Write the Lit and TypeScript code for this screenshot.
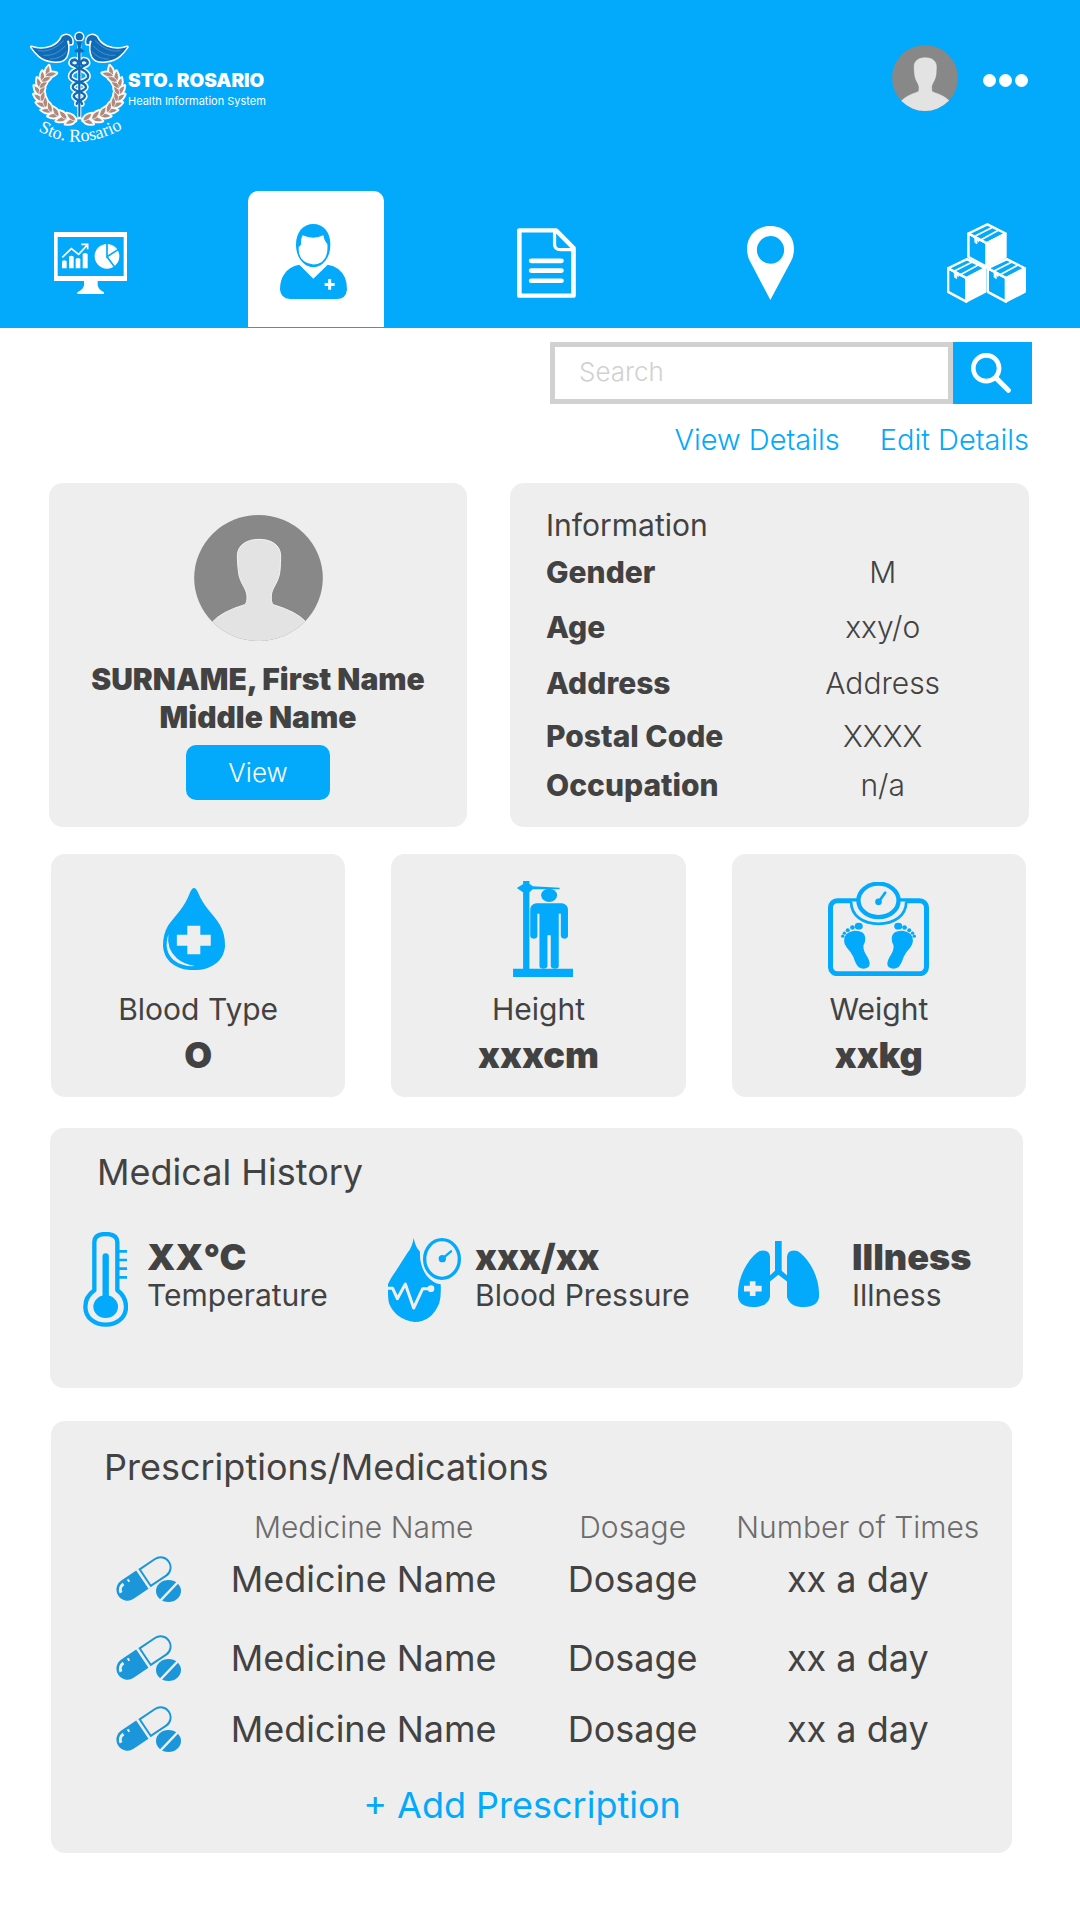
import { LitElement, html, css, svg } from "lit";
import { customElement, state } from "lit/decorators.js";

const BLUE = "#03a9fa";
const PANEL = "#eeeeee";

const rad = (deg: number) => (deg * Math.PI) / 180;

/* Laurel leaves: pairs along an ellipse, pointing up and outward. */
const laurel = () => {
  const out = [];
  for (let a = 97; a <= 214; a += 13) {
    const x = 180 + 118 * Math.cos(rad(a));
    const y = 214 + 86 * Math.sin(rad(a));
    const dir = (Math.atan2(86 * Math.cos(rad(a)), -118 * Math.sin(rad(a))) * 180) / Math.PI;
    for (const turn of [-30, 34]) {
      out.push(svg`<path d="M-5 0Q10 -14 31 0Q10 14 -5 0Z" transform="translate(${x} ${y}) rotate(${dir + turn})"/>`);
    }
  }
  return out;
};

const wing = svg`<path d="M36 81Q66 92 97 80Q120 70 128 50Q140 41 152 49Q162 58 158 72L150 73Q151 57 143 63Q151 88 141 110Q130 128 101 124Q75 121 60 108Q48 98 36 81Z"/>`;
const feathers = svg`<path d="M56 92Q95 100 133 62M72 106Q108 110 138 78M92 117Q122 118 142 95" fill="none" stroke="#5aa5dd" stroke-width="2"/>`;
const snake = svg`<path d="M158 124Q164 116 174 123Q180 136 165 137C148 132 154 118 168 118M165 137C190 150 210 156 206 172C200 188 160 184 160 202C162 216 197 214 197 229C194 242 172 240 172 252" fill="none" stroke-linecap="round"/>`;
const mirror = "translate(360 0) scale(-1 1)";

const logoArt = html`
  <svg class="crest" viewBox="32 30 294 339" role="img" aria-label="Sto. Rosario crest">
    <g fill="#fff" stroke="#fff" stroke-width="9" stroke-linejoin="round">
      ${laurel()}
      <g transform=${mirror}>${laurel()}</g>
      ${wing}
      <g transform=${mirror}>${wing}</g>
      <circle cx="180" cy="50" r="11" />
      <path d="M180 60V298" stroke-width="12" />
      <g stroke-width="16">${snake}<g transform=${mirror}>${snake}</g></g>
    </g>
    <g fill="#ad8a7c" stroke="#fff" stroke-width="2">
      ${laurel()}
      <g transform=${mirror}>${laurel()}</g>
    </g>
    <g fill="#0f6bb6">
      ${wing}${feathers}
      <g transform=${mirror}>${wing}${feathers}</g>
      <circle cx="180" cy="50" r="11" />
      <path d="M172 64H188L184 84L196 94L184 98L183 290H177L176 98L164 94L176 84Z" />
    </g>
    <g stroke="#0f6bb6" stroke-width="7">${snake}<g transform=${mirror}>${snake}</g></g>
    <path id="ribbon" d="M56 332Q180 404 324 318" fill="none" />
    <text class="crest-text"><textPath href="#ribbon">Sto. Rosario</textPath></text>
  </svg>
`;

const avatar = (cls: string) => html`
  <svg class=${cls} viewBox="462 135 387 378" preserveAspectRatio="none" role="img" aria-label="Profile picture">
    <defs><clipPath id="disc"><ellipse cx="655.5" cy="324" rx="193" ry="189" /></clipPath></defs>
    <g clip-path="url(#disc)">
      <rect x="462" y="135" width="387" height="378" fill="#888" />
      <path
        d="M592 258C592 225 620 208 657 208C694 208 722 225 722 258Q722 280 720 302C716 340 695 352 694 378Q693 398 700 404Q770 425 797 455V520H518V455Q545 425 614 404Q622 398 621 378C619 352 598 340 595 302Q592 280 592 258Z"
        fill="#e3e3e3" stroke="#f2f2f2" stroke-width="3" />
    </g>
  </svg>
`;

const crate = svg`
  <path d="M-51 -29L2 -56L53 -29L0 0Z" fill="none" stroke-width="7"/>
  <path d="M-51 -29V41L0 70V0Z" fill="none" stroke-width="7"/>
  <path d="M0 0L53 -29V41L0 70Z" stroke-width="6"/>
  <path d="M18 -48L-36 -19M34 -39L-18 -9" stroke-width="5"/>
  <path d="M-34 -19L-22 -12V-4L-27 -8V2L-33 -2Z" stroke-width="2"/>
`;

const icons = {
  dashboard: html`<svg class="i-dash" viewBox="72 162 219 186" preserveAspectRatio="none" aria-hidden="true">
    <path fill-rule="evenodd" fill="#fff" d="M72 162H291V309H72ZM83 177V294H281V177Z" />
    <path fill="#fff" d="M162 307H203V322Q205 335 222 343V348H142V343Q160 335 162 322Z" />
    <path fill="#fff" d="M96 250Q103 244 110 250V271H96ZM117 236Q124 230 131 236V271H117ZM137 243Q144 237 151 243V271H137ZM158 228Q165 222 173 228V271H158Z" />
    <path fill="none" stroke="#fff" stroke-width="5" d="M97 238L124 212L146 229L170 203M154 199H173V214" />
    <ellipse cx="231" cy="235" rx="37" ry="37" fill="#fff" />
    <path d="M231 196V236L270 211M231 236L256 270" fill="none" stroke=${BLUE} stroke-width="5" />
  </svg>`,
  patient: html`<svg class="i-patient" viewBox="750 128 216 226" preserveAspectRatio="none" aria-hidden="true">
    <g fill=${BLUE}>
      <path d="M850 128C880 128 901 152 901 190C901 232 876 258 850 258C824 258 798 232 798 190C798 152 820 128 850 128Z" />
      <path d="M808 251L850 293L893 251Q930 257 945 290Q951 305 951 325Q948 354 920 354H780Q752 352 750 325Q750 298 762 280Q778 256 808 251Z" />
    </g>
    <path fill="#fff" d="M818 162Q850 177 880 162Q883 180 892 188Q897 248 850 250Q804 246 806 198L813 190Q812 172 818 162Z" />
    <path stroke="#fff" stroke-width="9" d="M884 310H914M899 294V326" />
  </svg>`,
  records: html`<svg class="i-doc" viewBox="48 54 165 207" preserveAspectRatio="none" aria-hidden="true">
    <g fill="none" stroke="#fff" stroke-linejoin="round">
      <path stroke-width="13" d="M54.500 61H157L206 113V254H54.500Z" />
      <path stroke-width="9" d="M153 64V102Q153 118 170 118H206" />
      <path stroke-width="14" stroke-linecap="round" d="M88 151H172M88 180H172M88 210H172" />
    </g>
  </svg>`,
  location: html`<svg class="i-pin" viewBox="692 44 131 220" preserveAspectRatio="none" aria-hidden="true">
    <path fill="#fff" fill-rule="evenodd"
      d="M757 264L700 148Q692 132 692 112C692 70 722 44 757.500 44S823 70 823 112Q823 132 815 148ZM757.500 74A38 41 0 1 0 757.500 156A38 41 0 1 0 757.500 74Z" />
  </svg>`,
  inventory: html`<svg class="i-boxes" viewBox="1252 39 221 237" preserveAspectRatio="none" aria-hidden="true">
    <g fill="#fff" stroke="#fff" stroke-linejoin="round">
      <g transform="translate(1363 99)">${crate}</g>
      <g transform="translate(1306 202)">${crate}</g>
      <g transform="translate(1417 202)">${crate}</g>
    </g>
  </svg>`,
  search: html`<svg class="i-search" viewBox="1292 71 121 121" aria-hidden="true">
    <g fill="none" stroke="#fff" stroke-width="14">
      <circle cx="1338" cy="117" r="39" />
      <path stroke-width="15" stroke-linecap="round" d="M1368 147L1405 184" />
    </g>
  </svg>`,
  blood: html`<svg class="i-blood" viewBox="292 147 167 246" preserveAspectRatio="none" aria-hidden="true">
    <path fill=${BLUE} d="M366 147Q371 147 376 162C390 205 412 225 428 258Q440 285 440 320C438 365 408 393 366 393C322 393 294 365 292 320Q292 285 305 258C325 225 343 205 356 162Q361 147 366 147Z" />
    <path fill=${PANEL} d="M350 260H381V287H406V320H381V346H350V320H325V287H350ZM305 285Q292 335 318 364Q338 384 368 381Q340 375 325 358Q300 330 305 285Z" />
  </svg>`,
  height: html`<svg class="i-height" viewBox="1097 120 167 288" preserveAspectRatio="none" aria-hidden="true">
    <g fill=${BLUE}>
      <path d="M1121 383H1264V408H1121ZM1145 120H1160V385H1145ZM1130 141L1146 128H1160L1168 136L1232 140V145H1168L1158 156H1147Z" />
      <ellipse cx="1207" cy="163" rx="19" ry="20" />
      <path d="M1176 187H1238Q1251 190 1252 205V286Q1251 293 1243 293Q1236 293 1235 286V218H1230V375Q1230 383 1221 383Q1212 383 1211 375V283H1203V375Q1202 383 1193 383Q1184 383 1184 375V218H1179V286Q1178 293 1170 293Q1163 293 1162 286V205Q1163 190 1176 187Z" />
    </g>
  </svg>`,
  weight: html`<svg class="i-weight" viewBox="384 126 302 281" aria-hidden="true">
    <g fill="none" stroke=${BLUE}>
      <rect x="391.500" y="182" width="287" height="218" rx="20" stroke-width="15" />
      <path d="M453 184C453 228 490 251 535 251S618 228 618 184" stroke=${BLUE} stroke-width="8" fill=${PANEL} />
      <ellipse cx="535" cy="181" rx="60" ry="50" stroke-width="13" fill=${PANEL} />
      <path d="M535 186L555 158" stroke-width="8" stroke-linecap="round" />
    </g>
    <circle cx="535" cy="185" r="10" fill=${BLUE} />
    ${["translate(0 0)", "translate(1070 0) scale(-1 1)"].map(
      (t) => svg`<g fill=${BLUE} transform=${t}>
        <path d="M432 302Q432 276 462 272Q492 271 495 290Q497 305 490 315Q488 330 502 350Q514 372 505 380Q490 390 475 380Q466 370 460 350Q452 335 440 322Q432 312 432 302Z"/>
        <ellipse cx="476" cy="258" rx="12" ry="10"/><circle cx="457" cy="262" r="7"/>
        <circle cx="443" cy="270" r="6"/><circle cx="433" cy="279" r="5"/><circle cx="428" cy="288" r="5"/>
      </g>`
    )}
  </svg>`,
  temperature: html`<svg class="i-temp" viewBox="129 336 135 285" preserveAspectRatio="none" aria-hidden="true">
    <path fill="none" stroke=${BLUE} stroke-width="13" stroke-linejoin="round"
      d="M163 511V366Q163 342 197 342T232 366V511Q258 530 258 560C258 594 230 614 197 614S136 594 136 560Q136 530 163 511Z" />
    <ellipse cx="197" cy="560" rx="37" ry="34" fill=${BLUE} />
    <path stroke=${BLUE} stroke-width="19" stroke-linecap="round" d="M197 409V545" />
    <path stroke=${BLUE} stroke-width="8" d="M234 394H261M234 420H261M234 446H261M234 472H261" />
  </svg>`,
  pressure: html`<svg class="i-bp" viewBox="1044 357 219 252" preserveAspectRatio="none" aria-hidden="true">
    <path fill=${BLUE} d="M1121 357Q1126 385 1140 398Q1138 440 1160 470Q1178 492 1202 496Q1204 530 1198 552Q1175 609 1124 609Q1068 602 1048 555Q1044 545 1044 520V496Q1050 480 1068 455L1102 402Q1117 385 1121 357Z" />
    <path fill="none" stroke=${PANEL} stroke-width="9" stroke-linejoin="round" d="M1040 508H1058L1072 539L1096 495L1121 567L1148 509H1172" />
    <circle cx="1173" cy="509" r="10" fill=${PANEL} />
    <ellipse cx="1206" cy="420" rx="52" ry="58" fill="none" stroke=${BLUE} stroke-width="10" />
    <path stroke=${BLUE} stroke-width="7" stroke-linecap="round" d="M1208 418L1233 397" />
    <circle cx="1207" cy="419" r="11" fill=${BLUE} />
  </svg>`,
  lungs: html`<svg class="i-lungs" viewBox="594 123 243 198" aria-hidden="true">
    <g fill=${BLUE}>
      <path d="M690 170V290Q683 321 638 321Q597 319 594 290Q592 240 620 194Q640 163 659 153Q688 147 690 170Z" />
      <path d="M741 170V290Q748 321 793 321Q834 319 837 290Q839 240 811 194Q791 163 772 153Q743 147 741 170Z" />
      <path d="M705 123H725V212L743 228V246L715 224L688 246V228L705 212Z" />
    </g>
    <path stroke=${PANEL} stroke-width="17" d="M612 266H665M638 244V288" />
  </svg>`,
  pills: html`<svg class="i-pills" viewBox="0 0 65 46" aria-hidden="true">
    <g transform="translate(28 22.500) rotate(-34)">
      <path d="M-2 -11H-20A11 11 0 0 0 -20 11H-2Z" fill="#1b96da" />
      <path d="M1.500 -10H20A10 10 0 0 1 20 10H1.500Z" fill="none" stroke="#1b96da" stroke-width="2" />
      <path d="M-27 -1A7 7 0 0 1 -20 -7M-15 -7H-13" fill="none" stroke="#eee" stroke-width="3" />
    </g>
    <ellipse cx="52.500" cy="35" rx="14" ry="12" fill="#eee" />
    <ellipse cx="52.500" cy="35" rx="12.500" ry="11" fill="#1b96da" />
    <path d="M43 46L63 25" stroke="#eee" stroke-width="2.500" />
  </svg>`,
};

@customElement("app-root")
export class AppRoot extends LitElement {
  @state() private tab = "patient";

  static styles = css`
    :host {
      --blue: #03a9fa;
      --panel: #eeeeee;
      --ink: #434242;
      display: block;
      min-height: 100vh;
      background: #fff;
      color: var(--ink);
      font-family: Inter, "Open Sans", sans-serif;
      font-weight: 300;
    }
    * { box-sizing: border-box; }
    svg { display: block; flex: none; }
    button, input { font: inherit; border: 0; margin: 0; padding: 0; background: none; cursor: pointer; }
    h1, h2, p, dl, dd, dt { margin: 0; font-weight: inherit; }
    a { color: var(--blue); text-decoration: none; }

    .header { background: var(--blue); padding-bottom: 1px; color: #fff; }
    .bar { display: flex; justify-content: space-between; align-items: flex-start; padding: 30px 52px 0 30px; height: 191px; }
    .brand { display: flex; align-items: flex-start; }
    .crest { width: 98px; height: 113px; overflow: visible; }
    .crest-text { font: 54px "Liberation Serif", serif; fill: #fff; }
    .brand-name { padding-top: 38px; }
    .brand-title { font-size: 19px; line-height: 26px; font-weight: 900; }
    .brand-sub { font-size: 11px; line-height: 14px; font-weight: 400; }
    .account { display: flex; align-items: center; gap: 25px; padding-top: 15px; }
    .avatar-sm { width: 66px; height: 66px; }
    .menu { display: flex; gap: 3px; padding-top: 5px; }
    .dot { width: 13px; height: 13px; border-radius: 50%; background: #fff; }

    .nav { display: grid; grid-template-columns: 181fr 270fr 191fr 257fr 175fr; padding-right: 6px; justify-items: center; }
    .tab { width: 136px; height: 136px; display: flex; align-items: center; justify-content: center; border-radius: 10px 10px 0 0; padding-top: 8px; }
    .tab.on { background: #fff; padding-top: 4px; }
    .i-dash { width: 73px; height: 62px; }
    .i-patient { width: 72px; height: 75px; }
    .i-doc { width: 59px; height: 70px; }
    .i-pin { width: 47px; height: 74px; }
    .i-boxes { width: 79px; height: 80px; }

    .search { display: flex; width: 482px; margin: 14px 48px 0 auto; height: 62px; }
    .search-box { flex: 1; min-width: 0; border: 5px solid #d1d1d1; border-radius: 0; padding: 0 24px 4px; font-size: 26px; outline: 0; cursor: text; color: var(--ink); }
    .search-box::placeholder { color: #d1d1d1; opacity: 1; }
    .search-go { width: 79px; background: var(--blue); display: flex; align-items: center; padding-left: 18px; }
    .i-search { width: 40px; height: 40px; }
    .links { display: flex; justify-content: flex-end; gap: 40px; padding: 18px 51px 0; font-size: 29px; line-height: 36px; }

    .card { background: var(--panel); border-radius: 14px; }
    .overview { display: grid; grid-template-columns: 418fr 519fr; gap: 43px; padding: 25px 51px 0 49px; }
    .person { display: flex; flex-direction: column; align-items: center; padding: 32px 10px 27px; }
    .avatar-lg { width: 129px; height: 126px; }
    .name { margin-top: 19px; font-size: 30px; line-height: 38px; font-weight: 900; text-align: center; }
    .view { margin-top: 9px; width: 144px; height: 55px; border-radius: 10px; background: var(--blue); color: #fff; font-size: 26px; }
    .info { padding: 22px 0 20px 36px; }
    .info-title { font-size: 30px; line-height: 40px; font-weight: 400; }
    .facts { display: grid; grid-template-columns: 190fr 292fr; grid-template-rows: 53px 57px 55px 52px 45px; align-items: center; font-size: 30px; line-height: 36px; }
    .facts dt { font-weight: 800; white-space: nowrap; }
    .facts dd { text-align: center; }

    .stats, .history, .meds { font-weight: 400; }
    .stats { display: grid; grid-template-columns: repeat(3, 1fr); gap: 46px; padding: 27px 54px 0 51px; }
    .stat { display: flex; flex-direction: column; align-items: center; padding: 26px 0 22px; }
    .stat-icon { height: 98px; display: flex; align-items: center; margin-bottom: 13px; }
    .stat-label { font-size: 30px; line-height: 36px; }
    .stat-value { margin-top: 8px; font-size: 36px; line-height: 40px; font-weight: 900; }
    .i-blood { width: 70px; height: 82px; }
    .i-height { width: 70px; height: 96px; }
    .i-weight { width: 101px; height: 94px; }

    .history { margin: 31px 57px 0 50px; padding: 22px 0 61px 33px; }
    .history-title { font-size: 36px; line-height: 44px; padding-left: 14px; }
    .vitals { display: grid; grid-template-columns: 305fr 350fr 285fr; margin-top: 38px; height: 95px; align-items: center; }
    .vital { display: flex; align-items: center; }
    .vital-text { padding-bottom: 9px; white-space: nowrap; }
    .vital-value { font-size: 36px; line-height: 40px; font-weight: 900; }
    .vital-label { font-size: 30px; line-height: 36px; }
    .i-temp { width: 45px; height: 95px; margin-right: 19px; }
    .i-bp { width: 73px; height: 84px; margin-right: 14px; }
    .i-lungs { width: 81px; height: 66px; margin: 0 33px 11px 0; }

    .meds { margin: 33px 68px 0 51px; padding: 26px 19px 28px 0; }
    .meds-title { font-size: 36px; line-height: 40px; padding-left: 53px; }
    .table { width: 100%; margin-top: 28px; border-collapse: collapse; table-layout: fixed; text-align: center; white-space: nowrap; }
    .table th, .table td { padding: 0; }
    .table th { font-size: 30px; line-height: 24px; font-weight: 300; color: #6d6b6b; }
    .table td { font-size: 36px; line-height: 40px; height: 79px; }
    .table tr:last-child td { height: 64px; }
    .c-icon { width: 14.2%; }
    .c-name { width: 38%; }
    .c-dose { width: 19.1%; }
    .i-pills { width: 65px; height: 46px; margin-left: 65px; }
    .add { display: block; margin: 24px auto 0; color: var(--blue); font-size: 36px; line-height: 40px; }
  `;

  private navItem(id: string, label: string, icon: unknown) {
    return html`<button
      class="tab ${this.tab === id ? "on" : ""}"
      aria-label=${label}
      aria-current=${this.tab === id ? "page" : "false"}
    >${icon}</button>`;
  }

  private stat(icon: unknown, label: string, value: string) {
    return html`<section class="card stat">
      <div class="stat-icon">${icon}</div>
      <p class="stat-label">${label}</p>
      <p class="stat-value">${value}</p>
    </section>`;
  }

  private vital(icon: unknown, value: string, label: string) {
    return html`<div class="vital">
      ${icon}
      <div class="vital-text">
        <p class="vital-value">${value}</p>
        <p class="vital-label">${label}</p>
      </div>
    </div>`;
  }

  render() {
    const facts = [
      ["Gender", "M"],
      ["Age", "xxy/o"],
      ["Address", "Address"],
      ["Postal Code", "XXXX"],
      ["Occupation", "n/a"],
    ];
    return html`
      <header class="header">
        <div class="bar">
          <div class="brand">
            ${logoArt}
            <div class="brand-name">
              <h1 class="brand-title">STO. ROSARIO</h1>
              <p class="brand-sub">Health Information System</p>
            </div>
          </div>
          <div class="account">
            ${avatar("avatar-sm")}
            <button class="menu" aria-label="More">
              <span class="dot"></span><span class="dot"></span><span class="dot"></span>
            </button>
          </div>
        </div>
        <nav class="nav">
          ${this.navItem("dashboard", "Dashboard", icons.dashboard)}
          ${this.navItem("patient", "Patients", icons.patient)}
          ${this.navItem("records", "Records", icons.records)}
          ${this.navItem("location", "Location", icons.location)}
          ${this.navItem("inventory", "Inventory", icons.inventory)}
        </nav>
      </header>
      <main>
        <form class="search" role="search" @submit=${(e: Event) => e.preventDefault()}>
          <input class="search-box" type="text" placeholder="Search" aria-label="Search" />
          <button class="search-go" aria-label="Search">${icons.search}</button>
        </form>
        <div class="links"><a href="#view">View Details</a><a href="#edit">Edit Details</a></div>
        <div class="overview">
          <section class="card person">
            ${avatar("avatar-lg")}
            <h2 class="name">SURNAME, First Name<br />Middle Name</h2>
            <button class="view">View</button>
          </section>
          <section class="card info">
            <h2 class="info-title">Information</h2>
            <dl class="facts">${facts.map(([k, v]) => html`<dt>${k}</dt><dd>${v}</dd>`)}</dl>
          </section>
        </div>
        <div class="stats">
          ${this.stat(icons.blood, "Blood Type", "O")}
          ${this.stat(icons.height, "Height", "xxxcm")}
          ${this.stat(icons.weight, "Weight", "xxkg")}
        </div>
        <section class="card history">
          <h2 class="history-title">Medical History</h2>
          <div class="vitals">
            ${this.vital(icons.temperature, "XX°C", "Temperature")}
            ${this.vital(icons.pressure, "xxx/xx", "Blood Pressure")}
            ${this.vital(icons.lungs, "Illness", "Illness")}
          </div>
        </section>
        <section class="card meds">
          <h2 class="meds-title">Prescriptions/Medications</h2>
          <table class="table">
            <colgroup><col class="c-icon" /><col class="c-name" /><col class="c-dose" /><col /></colgroup>
            <thead>
              <tr><th></th><th>Medicine Name</th><th>Dosage</th><th>Number of Times</th></tr>
            </thead>
            <tbody>
              ${[1, 2, 3].map(
                () => html`<tr><td>${icons.pills}</td><td>Medicine Name</td><td>Dosage</td><td>xx a day</td></tr>`
              )}
            </tbody>
          </table>
          <button class="add">+ Add Prescription</button>
        </section>
      </main>
    `;
  }
}
